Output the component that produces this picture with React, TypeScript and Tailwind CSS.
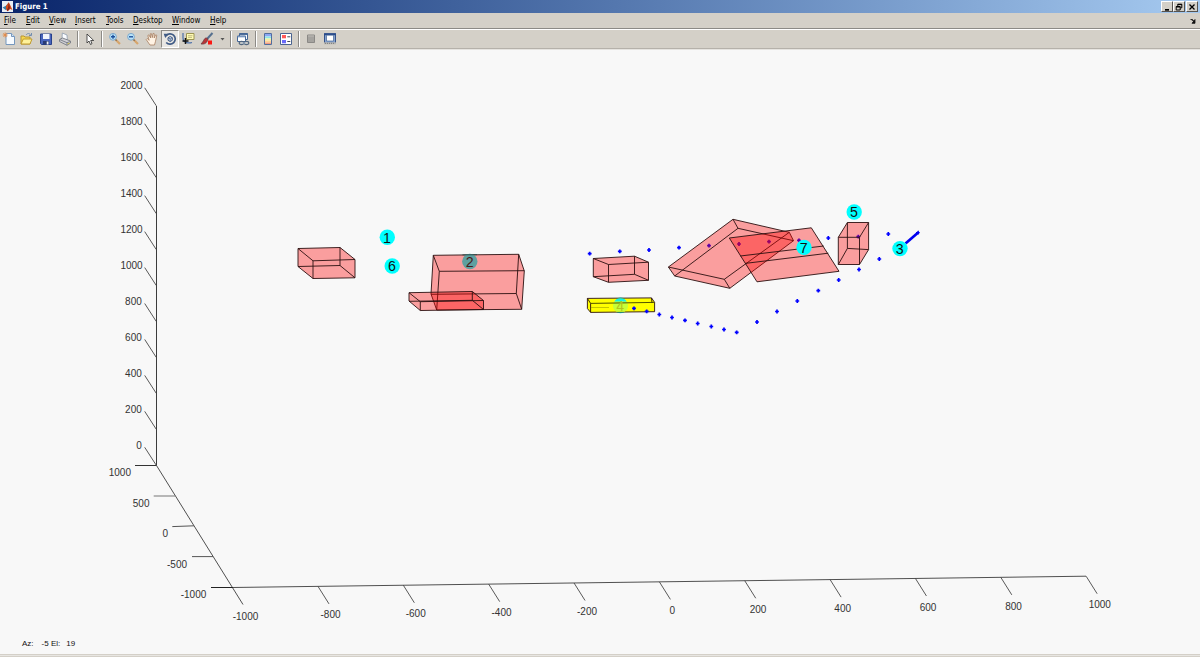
import type { ReactNode } from "react";

type Point = [number, number];

const menus: { label: string; width: string }[] = [
  { label: "File", width: "w-[22px]" },
  { label: "Edit", width: "w-[23px]" },
  { label: "View", width: "w-[26px]" },
  { label: "Insert", width: "w-[31px]" },
  { label: "Tools", width: "w-[27px]" },
  { label: "Desktop", width: "w-[39px]" },
  { label: "Window", width: "w-[38px]" },
  { label: "Help", width: "w-[24px]" },
];

function Icon({ children }: { children: ReactNode }) {
  return (
    <svg width="14" height="14" viewBox="0 0 14 14" className="shrink-0">
      {children}
    </svg>
  );
}

function Slot({ width, active, children }: { width: string; active?: boolean; children: ReactNode }) {
  return (
    <div
      className={`${width} flex h-[18px] shrink-0 items-center justify-center ${
        active ? "border border-t-[#8c8a86] border-l-[#8c8a86] border-r-white border-b-white bg-[#e9e7e3]" : ""
      }`}
    >
      {children}
    </div>
  );
}

function Separator({ width }: { width: string }) {
  return (
    <div className={`${width} flex h-4 shrink-0 justify-center`}>
      <div className="w-px bg-[#8c8a86]" />
      <div className="w-px bg-white" />
    </div>
  );
}

function Magnifier({ plus }: { plus?: boolean }) {
  return (
    <Icon>
      <path d="M7.5 7.5L12 12" stroke="#d7a56c" strokeWidth="2.2" />
      <path d="M7 7l1.6 1.6" stroke="#6c625c" strokeWidth="1.2" />
      <circle cx="5" cy="4.8" r="3.4" fill="#b9e4f8" stroke="#7ea8cc" />
      <path d={plus ? "M3 4.8h4M5 2.8v4" : "M3 4.8h4"} stroke="#1c4f9c" strokeWidth="1.4" />
    </Icon>
  );
}

function Toolbar() {
  return (
    <div className="flex h-[18px] items-center bg-[#d4d0c8]">
      <Slot width="w-[17px]">
        <Icon>
          <path d="M4 1.5h5.5l3 3v8H4z" fill="#f7fbff" stroke="#7597bd" />
          <path d="M9.5 1.5v3h3" fill="#d2e1f2" stroke="#7597bd" />
          <path d="M3.2 .5v5M.7 3h5M1.4 1.2L5 4.8M5 1.2L1.4 4.8" stroke="#e58a44" strokeWidth=".9" />
        </Icon>
      </Slot>
      <Slot width="w-[18px]">
        <Icon>
          <path d="M2 12V4h3l1 1h5v7z" fill="#f5d64f" stroke="#b89532" />
          <path d="M2 12l2.3-5H13l-2 5z" fill="#fff29a" stroke="#c09b30" />
          <path d="M7 3c1.5-2 3.5-2 4.5 0M12.5 1v2.5H10" fill="none" stroke="#718daf" />
        </Icon>
      </Slot>
      <Slot width="w-[21px]">
        <Icon>
          <path d="M1.5 2h11v10.5h-10l-1-1z" fill="#4965bd" stroke="#27408b" />
          <path d="M4 2h6.5v5H4z" fill="#f1f5fd" />
          <path d="M4 9h6v3.5H4z" fill="#293b72" />
          <path d="M7.7 9.5h1.8v3H7.7z" fill="#f3f5fb" />
        </Icon>
      </Slot>
      <Slot width="w-[17px]">
        <Icon>
          <path d="M4 7l.3-6L9 3l.3 5" fill="#fafcff" stroke="#8d9cad" strokeWidth=".8" />
          <path d="M1.5 7.5l3-1.5 8 3v2L9 13.3l-7.5-3.8z" fill="#d0d0d5" stroke="#777c85" strokeWidth=".9" />
          <path d="M2 7.7l7 3 3-1.2M9 10.7v2.6" fill="none" stroke="#777c85" strokeWidth=".9" />
          <path d="M9.5 12l2-1" stroke="#d4c44a" />
        </Icon>
      </Slot>
      <Separator width="w-[9px]" />
      <Slot width="w-[15px]">
        <Icon>
          <path d="M4 2v9l2-2 1.5 3.5 1.5-.8L7.7 8.5h3z" fill="#fff" stroke="#2b2b2b" strokeWidth=".8" />
        </Icon>
      </Slot>
      <Separator width="w-[10px]" />
      <Slot width="w-[16px]">
        <Magnifier plus />
      </Slot>
      <Slot width="w-[20px]">
        <Magnifier />
      </Slot>
      <Slot width="w-[18px]">
        <Icon>
          <path
            d="M5 13L1.2 7.5l1-1 2 1.8L2.8 3.5l1-.6L5.7 6 5.2 1.8l1.2-.2.9 4 .8-4.2 1.1.2v4.4l1.5-3.2 1.1.5-1.3 6L9.5 13z"
            fill="#fff3e4"
            stroke="#a77e5f"
            strokeWidth=".8"
          />
        </Icon>
      </Slot>
      <Slot width="w-[18px]" active>
        <Icon>
          <path d="M3 3.7A5.2 5.2 0 1 1 3.2 10.5" fill="none" stroke="#405b85" strokeWidth="1.7" />
          <path d="M.7 1.7h5.2L2.2 6z" fill="#405b85" />
          <path d="M5 5.7l2.2-1.2 2.1 1.2v2.6L7.2 9.5 5 8.3z" fill="#c8d5e5" stroke="#405b85" />
          <path d="M5 5.7l2.2 1.2 2.1-1.2M7.2 6.9v2.6" fill="none" stroke="#405b85" strokeWidth=".7" />
        </Icon>
      </Slot>
      <Slot width="w-[18px]">
        <Icon>
          <path d="M5.5 1.5h7.5v6H5.5z" fill="#fffbb5" stroke="#9d9552" />
          <path d="M7 3.7h4.5M7 5.4h4" stroke="#aaa36b" strokeWidth=".7" />
          <path d="M2 1v5c0 5 6 5.5 9 4.5" fill="none" stroke="#4b70aa" strokeWidth="1.2" />
          <path d="M1.5 9h6M4.5 6v6" stroke="#111" strokeWidth="1.5" />
        </Icon>
      </Slot>
      <Slot width="w-[20px]">
        <Icon>
          <path d="M12.5 1L7 7" stroke="#55708f" strokeWidth="2" />
          <path d="M8 7L6 5.8C3.5 7 4 9 1 12c3 .5 6-.5 7-5z" fill="#b73537" stroke="#653c43" strokeWidth=".7" />
          <path d="M8 8.5h4v4H8z" fill="#fa1712" />
        </Icon>
      </Slot>
      <Slot width="w-[10px]">
        <svg width="5" height="3" viewBox="0 0 5 3">
          <path d="M.5 0h4l-2 2.5z" fill="#555" />
        </svg>
      </Slot>
      <Separator width="w-[8px]" />
      <Slot width="w-[15px]">
        <Icon>
          <path d="M3.5 1.5h8v6h-8z" fill="#f6faff" stroke="#456796" />
          <path d="M3.5 2.2h8" stroke="#456796" strokeWidth="1.5" />
          <path d="M1.5 4h8v5.5h-8z" fill="#fff" stroke="#456796" />
          <path d="M1.5 4.7h8" stroke="#7594bd" strokeWidth="1.3" />
          <ellipse cx="5.5" cy="11" rx="2.3" ry="1.6" fill="none" stroke="#52677f" strokeWidth="1.1" />
          <ellipse cx="10.5" cy="11" rx="2.3" ry="1.6" fill="none" stroke="#52677f" strokeWidth="1.1" />
          <path d="M5 11h5.5" stroke="#aebfd1" />
        </Icon>
      </Slot>
      <Separator width="w-[11px]" />
      <Slot width="w-[14px]">
        <Icon>
          <path d="M3.5 1.5h7v11h-7z" fill="#fff" stroke="#516e9d" />
          <path d="M4 2h6v2.5H4z" fill="#8aa7f5" />
          <path d="M4 4.5h6v2H4z" fill="#8ee6e5" />
          <path d="M4 6.5h6v2H4z" fill="#eef3a4" />
          <path d="M4 8.5h6v2H4z" fill="#ffd392" />
          <path d="M4 10.5h6V12H4z" fill="#ee9a82" />
        </Icon>
      </Slot>
      <Slot width="w-[22px]">
        <Icon>
          <path d="M1.5 1.5h11v11h-11z" fill="#fff" stroke="#4a638f" />
          <path d="M3 3h4v3.3H3z" fill="#ff5958" />
          <path d="M3 8h4v3.3H3z" fill="#6969fa" />
          <path d="M8.3 4.8h3M8.3 9.5h3" stroke="#3f4552" />
        </Icon>
      </Slot>
      <Separator width="w-[4px]" />
      <Slot width="w-[20px]">
        <Icon>
          <path d="M3.5 3h7v7.5h-7z" fill="#a5a39f" stroke="#8b8986" />
          <path d="M4 4h6" stroke="#bdbab5" />
        </Icon>
      </Slot>
      <Slot width="w-[18px]">
        <Icon>
          <path d="M1.5 2h11v9.5h-11z" fill="#86a3cf" stroke="#345087" />
          <path d="M1 2.2h12" stroke="#284b8b" strokeWidth="2" />
          <path d="M3.5 3.2h7V9h-7z" fill="#fff" stroke="#456494" strokeWidth=".7" />
          <path d="M1 11.3h12" stroke="#b8b7b3" strokeWidth="2" />
          <path d="M2 11.3h10" stroke="#777" strokeDasharray="1 1" />
        </Icon>
      </Slot>
    </div>
  );
}

function WindowButton({ children }: { children: ReactNode }) {
  return (
    <div className="flex h-[11px] w-[12px] items-center justify-center border border-t-white border-l-white border-r-[#55534f] border-b-[#55534f] bg-[#d4d0c8]">
      <svg width="8" height="8" viewBox="0 0 8 8" className="shrink-0">
        {children}
      </svg>
    </div>
  );
}

function TitleBar() {
  return (
    <div className="flex h-[13px] items-center bg-linear-to-r from-[#0a246a] to-[#a6caf0] pr-[2px] pl-[2px]">
      <svg width="11" height="11" viewBox="0 0 11 11" className="shrink-0">
        <path d="M0 0h11v11H0z" fill="#e9eef5" />
        <path d="M.5 6.5L4 4.7 6.8 1.5 5.2 8 3.7 9z" fill="#3c7fa8" />
        <path d="M4 5l2.8-3.7L8.2 4l2.3 5-2.3-1-2.5 2.2L4 7.7z" fill="#d94d1b" />
        <path d="M6.8 1.5L6 7l-1.5 2 1.2 1.2L8 7z" fill="#8d251b" />
      </svg>
      <span className="ml-[2px] pt-px text-[7.8px] leading-[12px] font-bold whitespace-nowrap text-white">Figure 1</span>
      <div className="ml-auto flex">
        <WindowButton>
          <path d="M2 6h4v1.7H2z" fill="#000" />
        </WindowButton>
        <WindowButton>
          <path d="M2.8 3V1.2h4v3.6H5.5M2.8 1.6h4" fill="none" stroke="#000" />
          <path d="M1.2 3.5h4V7h-4zM1.2 4h4" fill="none" stroke="#000" />
        </WindowButton>
        <div className="w-px" />
        <WindowButton>
          <path d="M1.5 1.5l5 5M6.5 1.5l-5 5" stroke="#000" strokeWidth="1.3" />
        </WindowButton>
      </div>
    </div>
  );
}

const pts = (points: Point[]) => points.map((p) => p.join(",")).join(" ");

function Solid({ outline, edges, fill = "rgba(255,0,0,0.36)" }: { outline: Point[]; edges: string; fill?: string }) {
  return (
    <g stroke="#2a1010" strokeWidth=".9">
      <polygon points={pts(outline)} fill={fill} />
      <path d={edges} fill="none" />
    </g>
  );
}

const track: Point[] = [
  [589.7, 253.7], [619.8, 251.3], [649, 250], [679, 247.7], [828.3, 238], [888.3, 234],
  [634, 308.3], [646.7, 311.3], [659.3, 314.5], [672, 317.5], [685, 320.3], [697.7, 323.5],
  [711.3, 326.5], [724, 329.5], [736.7, 332.3], [757, 322], [777, 311.5], [797.3, 301],
  [818.3, 290.7], [838.7, 280], [859, 269.5], [879.3, 259],
];

const occludedTrack: Point[] = [[709, 245.6], [739, 244], [769, 241.7], [799, 240.3], [858.3, 236.7]];

const markers: { id: string; x: number; y: number }[] = [
  { id: "1", x: 387.3, y: 237.3 },
  { id: "6", x: 392.2, y: 266 },
  { id: "5", x: 854.2, y: 212 },
  { id: "7", x: 804, y: 247.4 },
  { id: "3", x: 900, y: 248.6 },
];

const xLabels: [string, number, number][] = [
  ["-1000", 245.5, 616], ["-800", 330.5, 614.6], ["-600", 415.7, 613.6], ["-400", 501.5, 612.3],
  ["-200", 587, 611.4], ["0", 672.3, 610], ["200", 758, 609.4], ["400", 842.7, 608.4],
  ["600", 928, 607.2], ["800", 1013.5, 606.4], ["1000", 1099.8, 604.8],
];

const yLabels: [string, number, number][] = [
  ["1000", 131, 472.7], ["500", 149.5, 503.5], ["0", 168, 533.6], ["-500", 187, 564.5], ["-1000", 206.3, 594.5],
];

const yTicks: { d: string; stroke: string }[] = [
  { d: "M135 465.5H156.5", stroke: "#333" },
  { d: "M153.7 496H175.5", stroke: "#777" },
  { d: "M172.3 526.6L194 525.8", stroke: "#555" },
  { d: "M192 556.6H213", stroke: "#555" },
  { d: "M211 587.5H233", stroke: "#222" },
];

function Dot({ at: [x, y] }: { at: Point }) {
  return <path d={`M${x - 1.9} ${y}h3.8M${x} ${y - 1.9}v3.8`} stroke="#0000ff" strokeWidth="1.7" />;
}

function Marker({ id, x, y }: { id: string; x: number; y: number }) {
  return (
    <g>
      <circle cx={x} cy={y} r="7.7" fill="#00ffff" />
      <text x={x - 0.3} y={y + 5.4} textAnchor="middle" fontSize="14.2" fill="#111">
        {id}
      </text>
    </g>
  );
}

function Plot() {
  return (
    <svg
      width="1200"
      height="604"
      viewBox="0 50 1200 604"
      className="block shrink-0 bg-[#f8f8f8] font-['Liberation_Sans',sans-serif]"
    >
      <g stroke="#3c3c3c" strokeWidth="1" fill="none">
        <path d="M156.5 106V465.5" />
        <path d="M156.5 465.5L243 604.5M232.5 587.5L1086 576.2" strokeWidth=".9" />
        {Array.from({ length: 11 }, (_, i) => (
          <path key={i} d={`M144.7 ${87.8 + i * 35.95}l11.6 18`} strokeWidth=".85" />
        ))}
        {yTicks.map(({ d, stroke }) => (
          <path key={d} d={d} stroke={stroke} />
        ))}
        {Array.from({ length: 10 }, (_, i) => (
          <path key={i} d={`M${318 + i * 85.35} ${586.4 - i * 1.13}l11 17.5`} strokeWidth=".85" />
        ))}
      </g>
      <g fontSize="10" fill="#333">
        {Array.from({ length: 11 }, (_, i) => (
          <text key={i} x={i < 6 ? 142.7 : 141.8} y={89.4 + i * 35.93} textAnchor="end">
            {2000 - i * 200}
          </text>
        ))}
        {yLabels.map(([t, x, y]) => (
          <text key={t} x={x} y={y + 3.6} textAnchor="end">
            {t}
          </text>
        ))}
        {xLabels.map(([t, x, y]) => (
          <text key={t} x={x} y={y + 3.6} textAnchor="middle">
            {t}
          </text>
        ))}
      </g>

      {occludedTrack.map((p) => (
        <Dot key={p[0]} at={p} />
      ))}

      <Solid
        outline={[[298, 248.5], [340, 247.5], [355, 259.5], [355, 277.8], [313, 278.5], [298, 266.5]]}
        edges="M298 248.5L313 260.8L355 259.5M313 260.8V278.5M340 247.5V265.5L355 277.8M298 266.5L340 265.5"
      />
      <Solid
        outline={[[433.3, 255.3], [518.7, 254.3], [524.3, 271], [521.7, 309.3], [436.7, 310], [431, 294]]}
        edges="M433.3 255.3L439.3 271.3L524.3 270.7M439.3 271.3L436.7 310M518.7 254.3L516.3 293.5L521.7 309.3M431 294.3L516.3 293.5"
      />
      <Solid
        outline={[[409, 292.7], [472.3, 291.5], [483.5, 300.5], [483.5, 309.5], [420.3, 310.5], [409, 301]]}
        edges="M409 292.7L420.3 301.7L483.5 300.5M420.3 301.7V310.5M472.3 291.5V300.3L483.5 309.5M409 301.3L472.3 300.3"
      />
      <circle cx="469.8" cy="261.5" r="7.7" fill="#5fa0a0" />
      <path d="M462.5 254.9L477 254.7" stroke="#264646" strokeWidth=".9" />
      <text x="469.6" y="266.9" textAnchor="middle" fontSize="14.2" fill="#4a1b1b">
        2
      </text>
      <Solid
        outline={[[593.3, 258.5], [634.5, 256.2], [648.5, 262.2], [648.5, 280.3], [608.5, 282.3], [593.3, 276.7]]}
        edges="M593.3 258.5L608.5 264.5L648.5 262.2M608.5 264.5V282.3M634.5 256.2V274.3L648.5 280.3M593.3 276.7L634.5 274.3"
      />

      <circle cx="620.5" cy="305.4" r="7.8" fill="#00ffff" />
      <Solid
        fill="#ffff00"
        outline={[[587.4, 298.4], [651.5, 297.9], [654.6, 302.4], [654.6, 311.7], [590.6, 312.4], [587.4, 308.5]]}
        edges="M587.4 298.4L590.6 303.4M590.6 303.4V312.4M651.5 297.9L652 303"
      />
      <path d="M613 304.5A7.6 7.6 0 0 0 616.5 311.8H624.5A7.6 7.6 0 0 0 628 304.5L626.5 301H614.5z" fill="#c8ff38" />
      <path d="M614.3 301.6C616 297 625 297 626.7 301.6z" fill="#12f2e6" />
      <path d="M591 307.5H609" stroke="#a0a000" strokeWidth=".6" />
      <path d="M590.6 303.4L654.6 302.4" stroke="#3d4000" strokeWidth=".9" />
      <text x="620.2" y="310.6" textAnchor="middle" fontSize="14" fill="#b3c41e">
        4
      </text>

      <Solid
        outline={[[733, 219.3], [789.3, 232.3], [793.5, 240.7], [729.8, 288.3], [674.7, 276], [668.4, 267]]}
        edges="M733 219.3L738 228.3L793.5 240.7M738 228.3L674.7 276M668.4 267L724.3 279.3L729.8 288.3M724.3 279.3L789.3 232.3"
      />
      <Solid
        outline={[[729.3, 238], [811.3, 227.8], [839, 271.3], [757, 281.8]]}
        edges="M740.3 256L823.7 246M745.3 263.4L828.3 253.2"
      />
      <Solid
        outline={[[847.4, 222.5], [868.6, 222.5], [868.6, 249.6], [859.5, 264.5], [838.3, 264.5], [838.3, 237.3]]}
        edges="M838.3 237.3H859.5V264.5M859.5 237.3L868.6 222.5M847.4 222.5V248.4L868.6 249.6M847.4 248.4L838.3 264.5"
      />

      {track.map((p) => (
        <Dot key={p[0]} at={p} />
      ))}
      <path d="M905.5 243.4L918.8 232" stroke="#0000f0" strokeWidth="2.7" />
      <path d="M916 232.5h3.6M918.3 230.7v3.8" stroke="#0000f0" />
      {markers.map((m) => (
        <Marker key={m.id} {...m} />
      ))}
      <text x="22" y="646.4" fontSize="8" fill="#111">
        <tspan>Az:</tspan>
        <tspan x="41.5">-5</tspan>
        <tspan x="51">El:</tspan>
        <tspan x="66.2">19</tspan>
      </text>
    </svg>
  );
}

export default function App() {
  return (
    <div className="flex h-[657px] w-[1200px] flex-col overflow-hidden bg-[#d4d0c8] font-['DejaVu_Sans_Condensed','DejaVu_Sans',sans-serif]">
      <TitleBar />
      <div className="flex h-[16px] items-center border-b border-[#8c8a86] pt-px pl-[4px] text-[8px] leading-[14px] text-black">
        {menus.map(({ label, width }) => (
          <div key={label} className={`${width} shrink-0 whitespace-nowrap`}>
            <span className="underline underline-offset-1">{label[0]}</span>
            {label.slice(1)}
          </div>
        ))}
        <svg width="6" height="6" viewBox="0 0 6 6" className="mr-[4px] ml-auto">
          <path d="M.5 1.5h2L4.5 4M5 1.5v3.8H2z" fill="#111" stroke="#111" strokeWidth=".8" />
        </svg>
      </div>
      <div className="h-px shrink-0 bg-white" />
      <Toolbar />
      <div className="h-px shrink-0 bg-[#b5b1aa]" />
      <div className="h-px shrink-0 bg-[#e6e4e0]" />
      <Plot />
      <div className="h-px shrink-0 bg-[#d4d0c8]" />
      <div className="h-px shrink-0 bg-[#e8e6e2]" />
      <div className="h-px shrink-0 bg-[#d4d0c8]" />
    </div>
  );
}
